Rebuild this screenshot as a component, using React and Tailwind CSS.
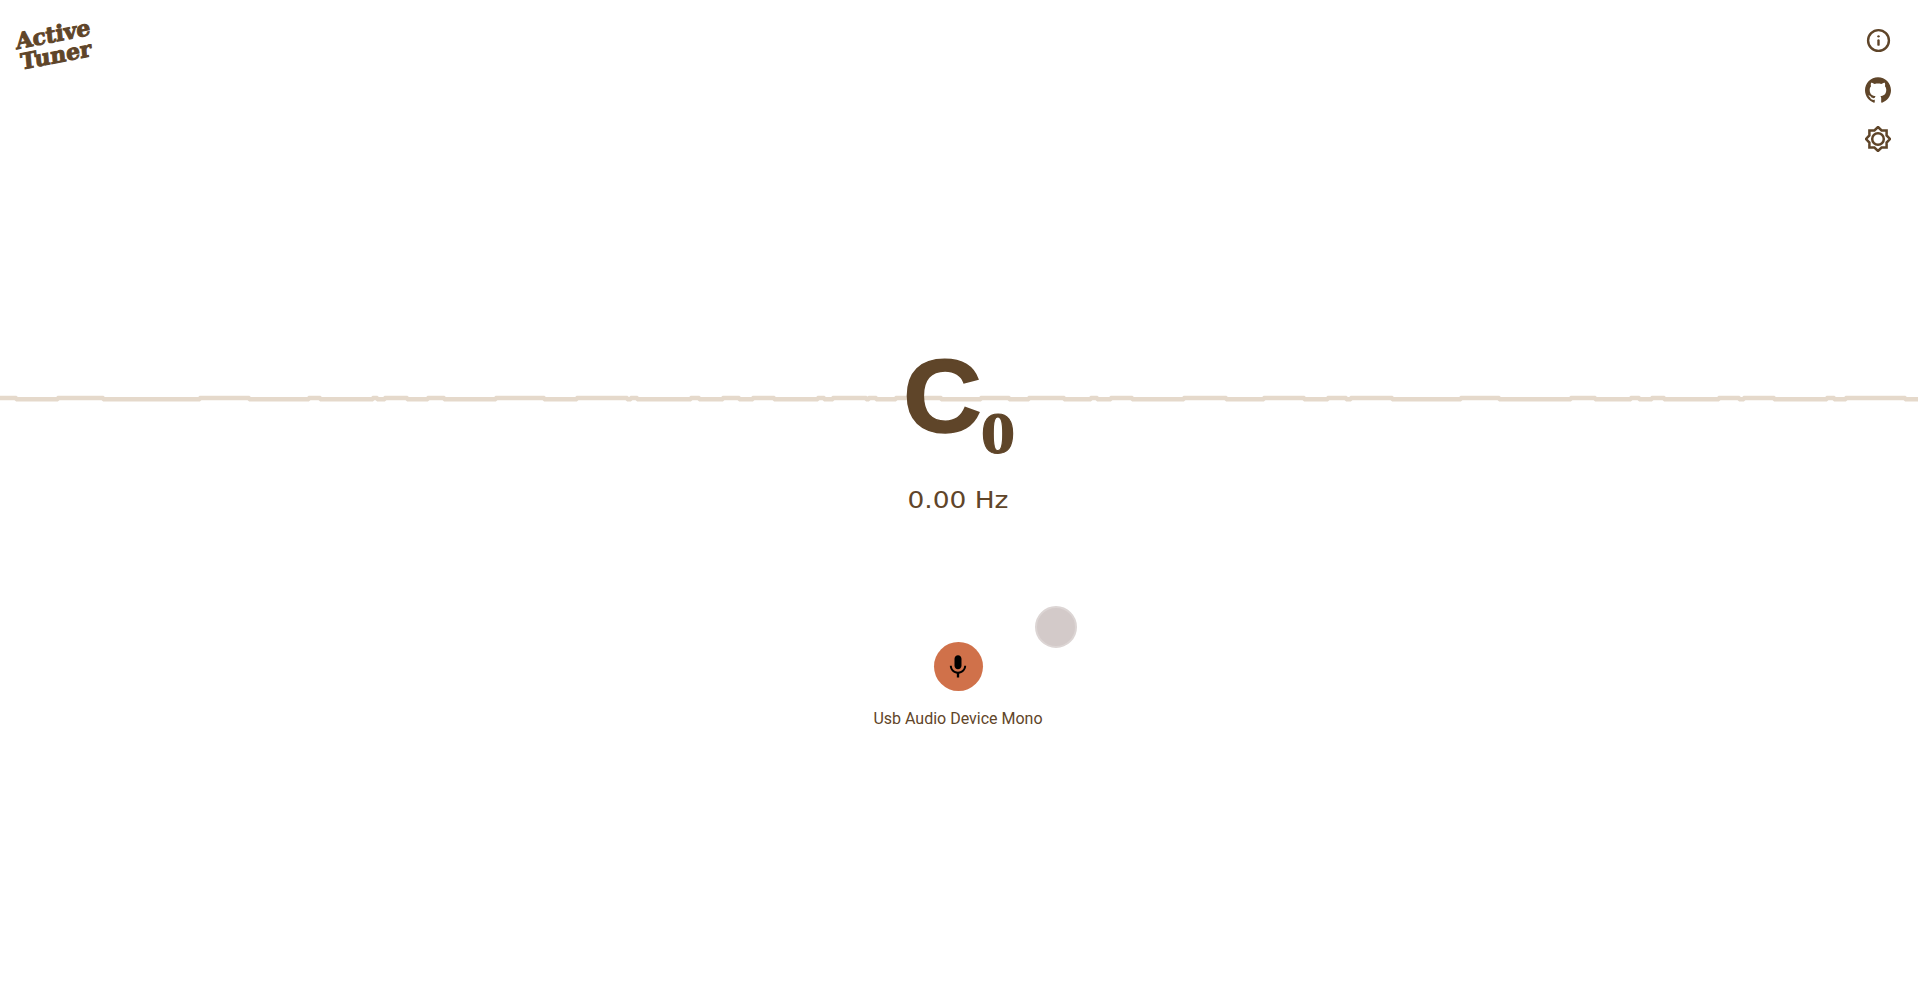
// App.jsx - Active Tuner idle screen

import React from 'react';
import { Info } from 'lucide-react';
import { MdMic } from 'react-icons/md';
import { SiGithub } from 'react-icons/si';

// x ranges where the idle wave sits a pixel higher
const WAVE_HIGH = [
  [0, 17], [57, 104], [199, 250], [308, 321], [372, 378], [384, 408], [427, 445],
  [495, 545], [576, 628], [630, 638], [690, 700], [722, 740], [752, 775], [817, 825],
  [832, 867], [868, 877], [895, 942], [980, 1010], [1028, 1065], [1090, 1098],
  [1110, 1133], [1183, 1227], [1263, 1305], [1327, 1347], [1350, 1393], [1460, 1500],
  [1570, 1596], [1630, 1640], [1651, 1665], [1718, 1740], [1743, 1775], [1826, 1835],
  [1845, 1906],
];

const buildWave = () => {
  const high = 3;
  const low = 4.3;
  let d = `M0 ${high}`;
  WAVE_HIGH.forEach(([start, end]) => {
    d += ` L${start} ${start === 0 ? high : low} L${start + 1.5} ${high} L${end - 1.5} ${high} L${end} ${low}`;
  });
  return `${d} L1918 ${low}`;
};

const SunIcon = () => (
  <svg width="26" height="26" viewBox="0 0 26 26" fill="none" stroke="currentColor" strokeWidth="2.5">
    <path d="M13 1 L16.6 4.4 L21.6 4.4 L21.6 9.4 L25 13 L21.6 16.6 L21.6 21.6 L16.6 21.6 L13 25 L9.4 21.6 L4.4 21.6 L4.4 16.6 L1 13 L4.4 9.4 L4.4 4.4 L9.4 4.4 Z" />
    <circle cx="13" cy="13" r="5.8" />
  </svg>
);

const App = () => {
  return (
    <div className="relative h-[984px] overflow-hidden bg-white text-[#5f4529]">
      {/* Wave behind the note */}
      <svg className="absolute left-0 top-[395px]" width="1918" height="8" viewBox="0 0 1918 8">
        <path d={buildWave()} fill="none" stroke="#e5d9cb" strokeWidth="4.6" />
      </svg>

      {/* Header */}
      <div className="relative flex justify-between items-start h-[355px]">
        <div
          className="ml-[16px] mt-[24px] -rotate-[11deg] font-bold text-[22px] leading-[21px] -skew-x-6 [-webkit-text-stroke:1px_#5f4529]"
          style={{ fontFamily: '"DejaVu Serif", serif' }}
        >
          <div>Active</div>
          <div className="ml-[3px]">Tuner</div>
        </div>

        <div className="flex flex-col items-center mr-[27px] mt-[16px] w-[26px]">
          <div className="flex items-center justify-center h-[49px]">
            <Info size={25} strokeWidth={2.3} />
          </div>
          <div className="flex items-center justify-center h-[49px]">
            <SiGithub size={26} />
          </div>
          <div className="flex items-center justify-center h-[49px]">
            <SunIcon />
          </div>
        </div>
      </div>

      {/* Note */}
      <div className="relative flex flex-col items-center">
        <div className="flex items-start h-[120px]">
          <span className="font-bold text-[104px] leading-[83px] scale-x-[1.05] [-webkit-text-stroke:1.5px_#5f4529]" style={{ fontFamily: '"Liberation Sans", sans-serif' }}>C</span>
          <span className="font-bold text-[60px] leading-[60px] mt-[48px] ml-[3px] scale-x-[1.15] [-webkit-text-stroke:1px_#5f4529]" style={{ fontFamily: '"Liberation Serif", serif' }}>0</span>
        </div>
        <div
          className="mt-[10px] -ml-[2px] text-[23px] leading-[30px] scale-x-[1.15]"
          style={{ fontFamily: '"DejaVu Sans", sans-serif' }}
        >
          0.00 Hz
        </div>

        {/* Mic */}
        <button className="mt-[127px] -ml-[2px] flex items-center justify-center w-[49px] h-[49px] rounded-full bg-[#d0714a] text-black">
          <MdMic size={28} />
        </button>
        <div className="mt-[16px] -ml-[2px] text-base leading-[24px]" style={{ fontFamily: 'Roboto, sans-serif' }}>
          Usb Audio Device Mono
        </div>
      </div>

      {/* Floating handle */}
      <div className="absolute left-[1035px] top-[606px] w-[42px] h-[42px] rounded-full bg-[#d3cac9] border-2 border-[#dcd5d4]" />
    </div>
  );
};

export default App;
